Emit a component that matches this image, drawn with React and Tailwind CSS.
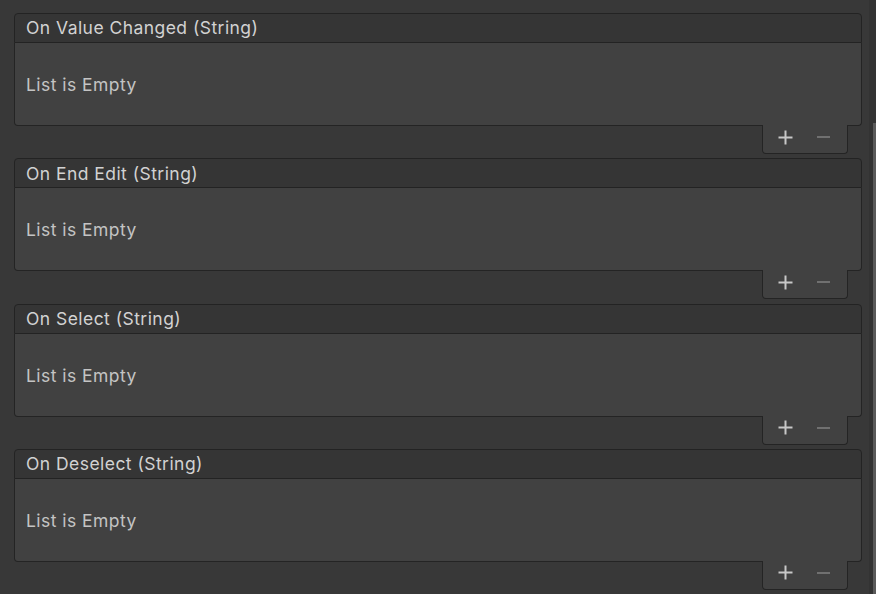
const events = ["On Value Changed (String)", "On End Edit (String)", "On Select (String)", "On Deselect (String)"];

function EventList({ title }) {
  return (
    <div className="flex flex-col">
      <div className="h-[30px] flex items-center px-[11px] pt-px bg-[#353535] border border-[#232323] rounded-t-[4px] text-[#d2d2d2]">
        {title}
      </div>
      <div className="h-[83px] flex items-center px-[11px] pt-[2px] bg-[#414141] border border-t-0 border-[#242424] rounded-b-[4px] text-[#c4c4c4]">
        List is Empty
      </div>
      <div className="flex justify-end pr-[14px]">
        <div className="h-[29px] w-[86px] -mt-px pb-[4px] flex items-center bg-[#414141] border border-t-0 border-[#242424] rounded-b-[4px]">
          <span className="w-[44px] flex justify-center text-[#c8c8c8]">
            <svg width="15" height="15" viewBox="0 0 15 15">
              <path d="M7.5 0.5v14M0.5 7.5h14" stroke="currentColor" strokeWidth="2" />
            </svg>
          </span>
          <span className="w-[32px] flex justify-center text-[#707070]">
            <svg width="13" height="4" viewBox="0 0 13 4">
              <path d="M0 2h13" stroke="currentColor" strokeWidth="2" />
            </svg>
          </span>
        </div>
      </div>
    </div>
  );
}

export default function App() {
  return (
    <div className="w-[876px] h-[594px] overflow-hidden bg-[#383838] flex" style={{ fontFamily: "Inter, 'Noto Sans', sans-serif" }}>
      <div className="flex-1 flex flex-col gap-[4.33px] pt-[13px] pl-[14px] pr-[7px] text-[17.5px] tracking-[0.45px]">
        {events.map((e) => (
          <EventList key={e} title={e} />
        ))}
      </div>
      <div className="w-[7px] flex bg-[#333333]">
        <div className="w-[4px]" />
        <div className="w-[3px] mt-[123px] bg-[#5a5a5a]" />
      </div>
    </div>
  );
}
